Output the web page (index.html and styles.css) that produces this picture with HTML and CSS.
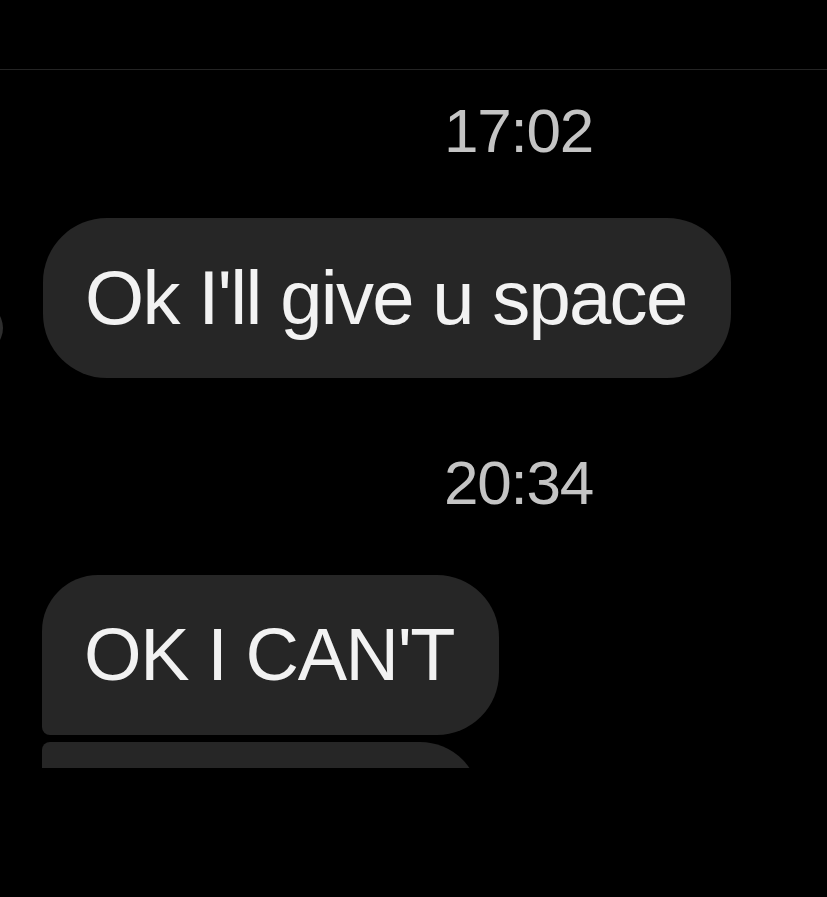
FILE: index.html
```html
<!DOCTYPE html>
<html lang="en">
<head>
    <meta charset="UTF-8">
    <meta name="viewport" content="width=device-width, initial-scale=1.0">
    <title>Messages</title>
    <link rel="stylesheet" href="styles.css">
</head>
<body>
    <div class="topbar"></div>

    <div class="thread">
        <div class="time time-first">17:02</div>

        <div class="row row-single">
            <div class="avatar"></div>
            <div class="bubble bubble-single">Ok I'll give u space</div>
        </div>

        <div class="time time-second">20:34</div>

        <div class="row">
            <div class="bubble bubble-first">OK I CAN'T</div>
        </div>

        <div class="row row-cut">
            <div class="bubble bubble-next"></div>
        </div>
    </div>
</body>
</html>
```

FILE: styles.css
```css
body {
    margin: 0;
    background-color: #000;
    font-family: "Liberation Sans", Arial, sans-serif;
    color: #f2f2f2;
}

.topbar {
    height: 69px;
    border-bottom: 1px solid #242424;
}

.thread {
    display: flex;
    flex-direction: column;
}

.time {
    font-size: 62px;
    line-height: 62px;
    letter-spacing: -1.2px;
    color: #c4c4c4;
    text-align: center;
    padding-left: 210px;
}

.time-first {
    margin-top: 30px;
}

.time-second {
    margin-top: 74px;
}

.row {
    display: flex;
    padding-left: 42px;
}

.row-single {
    margin-top: 56px;
    padding-left: 43px;
}

.avatar {
    width: 50px;
    height: 50px;
    border-radius: 50%;
    background-color: #2e2e2e;
    margin-left: -90px;
    margin-right: 40px;
    align-self: flex-end;
    margin-bottom: 25px;
}

.bubble {
    display: flex;
    align-items: center;
    height: 160px;
    padding: 0 45px 0 42px;
    background-color: #262626;
    font-size: 76px;
    line-height: 76px;
    letter-spacing: -1.7px;
    white-space: nowrap;
}

.bubble-single {
    border-radius: 64px;
}

.bubble-first {
    margin-top: 61px;
    font-size: 74px;
    letter-spacing: -1.4px;
    border-radius: 56px 62px 62px 8px;
}

.row-cut {
    margin-top: 7px;
    height: 26px;
    overflow: hidden;
}

.bubble-next {
    width: 438px;
    padding: 0;
    border-radius: 8px 60px 60px 8px;
}
```
